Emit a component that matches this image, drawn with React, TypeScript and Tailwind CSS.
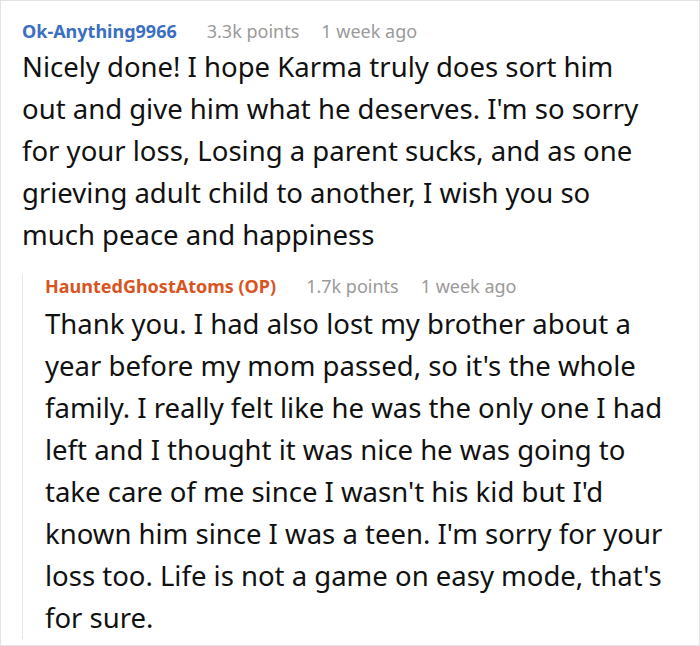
const font = { fontFamily: '"Noto Sans", "Open Sans", sans-serif' };

type CommentProps = {
  author: string;
  authorClass: string;
  points: string;
  age: string;
};

const CommentHeader = ({ author, authorClass, points, age }: CommentProps) => (
  <div className="flex items-baseline text-[18px] leading-[24px]">
    <span className={`font-bold ${authorClass}`}>{author}</span>
    <span className="ml-[30px] text-[#9a9a9a]">{points}</span>
    <span className="ml-[22px] text-[#9a9a9a]">{age}</span>
  </div>
);

const App = () => {
  return (
    <div
      style={font}
      className="w-[700px] h-[646px] bg-white border border-[#e3e3e3] overflow-hidden"
    >
      <div className="pl-[21px] pr-[31px] pt-[18px]">
        <CommentHeader
          author="Ok-Anything9966"
          authorClass="text-[#3b6fc4]"
          points="3.3k points"
          age="1 week ago"
        />
        <p className="mt-[3px] mr-[16px] text-[27.5px] leading-[42px] text-[#111]">
          Nicely done! I hope Karma truly does sort him out and give him what he
          deserves. I'm so sorry for your loss, Losing a parent sucks, and as one
          grieving adult child to another, I wish you so much peace and happiness
        </p>

        <div className="mt-[18px] border-l border-[#e6e6e6] pl-[22px]">
          <CommentHeader
            author="HauntedGhostAtoms (OP)"
            authorClass="text-[#d9541f]"
            points="1.7k points"
            age="1 week ago"
          />
          <p className="mt-[5px] text-[27.5px] leading-[42px] text-[#111]">
            Thank you. I had also lost my brother about a year before my mom
            passed, so it's the whole family. I really felt like he was the only
            one I had left and I thought it was nice he was going to take care of
            me since I wasn't his kid but I'd known him since I was a teen. I'm
            sorry for your loss too. Life is not a game on easy mode, that's for
            sure.
          </p>
        </div>
      </div>
    </div>
  );
};

export default App;
